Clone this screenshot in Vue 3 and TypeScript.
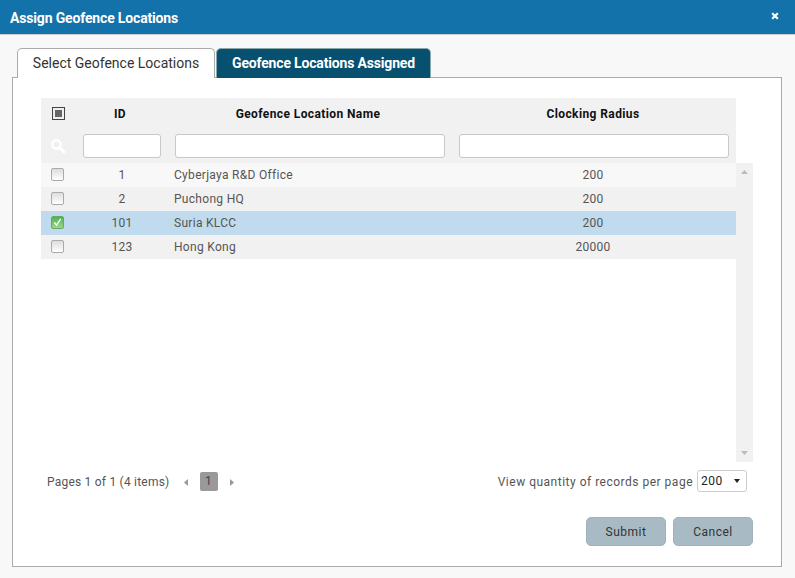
<script setup lang="ts">
interface Row { id: number; name: string; radius: number; checked?: boolean }
const rows: Row[] = [
  { id: 1, name: 'Cyberjaya R&D Office', radius: 200 },
  { id: 2, name: 'Puchong HQ', radius: 200 },
  { id: 101, name: 'Suria KLCC', radius: 200, checked: true },
  { id: 123, name: 'Hong Kong', radius: 20000 },
]
</script>

<template>
  <div class="dialog">
    <header class="title">
      <span class="title-text">Assign Geofence Locations</span>
      <svg class="close" width="8" height="8" viewBox="0 0 8 8"><path d="M1.2 1.2 6.8 6.8M6.8 1.2 1.2 6.8" stroke="#fff" stroke-width="2.2" fill="none"/></svg>
    </header>
    <div class="body">
      <div class="tabs">
        <div class="tab active">Select Geofence Locations</div>
        <div class="tab dark">Geofence Locations Assigned</div>
      </div>
      <div class="panel">
        <div class="grid-wrap">
          <div class="thead">
            <div class="hrow">
              <div class="c0"><span class="master"><i></i></span></div>
              <div class="c1">ID</div>
              <div class="c2">Geofence Location Name</div>
              <div class="c3">Clocking Radius</div>
            </div>
            <div class="frow">
              <div class="c0">
                <svg width="16" height="16" viewBox="0 0 16 16"><circle cx="6.5" cy="6.5" r="4.2" fill="none" stroke="#fff" stroke-width="2.4"/><path d="M9.7 9.7 14 14" stroke="#fff" stroke-width="3" stroke-linecap="round"/></svg>
              </div>
              <input class="f1" type="text" />
              <input class="f2" type="text" />
              <input class="f3" type="text" />
            </div>
          </div>
          <div class="scroller">
            <div class="rows">
              <div v-for="(r, i) in rows" :key="r.id" class="row" :class="{ alt: i % 2 === 1, sel: r.checked }">
                <div class="c0 cb-cell">
                  <span class="cb" :class="{ on: r.checked }">
                    <svg v-if="r.checked" width="12" height="12" viewBox="0 0 12 12"><path d="M2.5 6.500 5 9.500 9.500 2.500" stroke="#fff" stroke-width="1.500" fill="none"/></svg>
                  </span>
                </div>
                <div class="c1">{{ r.id }}</div>
                <div class="c2 name">{{ r.name }}</div>
                <div class="c3">{{ r.radius }}</div>
              </div>
            </div>
            <div class="sbar">
              <svg width="7" height="4" viewBox="0 0 7 4"><path d="M3.500 0 7 4H0z" fill="#bbb"/></svg>
              <svg width="7" height="4" viewBox="0 0 7 4"><path d="M0 0h7L3.500 4z" fill="#bbb"/></svg>
            </div>
          </div>
        </div>
        <div class="pager">
          <div class="left">
            <span class="ptext">Pages 1 of 1 (4 items)</span>
            <svg class="prev" width="4" height="7" viewBox="0 0 4 7"><path d="M4 0v7L0 3.500z" fill="#999"/></svg>
            <span class="page">1</span>
            <svg class="next" width="4" height="7" viewBox="0 0 4 7"><path d="M0 0v7l4-3.500z" fill="#999"/></svg>
          </div>
          <div class="right">
            <span class="vtext">View quantity of records per page</span>
            <span class="select">200<svg width="6" height="4" viewBox="0 0 6 4"><path d="M0 0h6L3 4z" fill="#222"/></svg></span>
          </div>
        </div>
        <div class="actions">
          <button class="btn" type="button">Submit</button>
          <button class="btn" type="button">Cancel</button>
        </div>
      </div>
    </div>
  </div>
</template>

<style>
html, body { margin: 0; background: #f8f8f8; }
</style>

<style scoped>
.dialog {
  width: 795px;
  height: 578px;
  background: #f8f8f8;
  font-family: Roboto, sans-serif;
  font-size: 12px;
  letter-spacing: 0.5px;
  color: #555;
  overflow: hidden;
}
.title {
  height: 34px;
  box-sizing: content-box;
  background: #1472aa;
  border-bottom: 1px solid #ccc;
  color: #fff;
  font-weight: 700;
  font-size: 14px;
  letter-spacing: -0.16px;
  display: flex;
  align-items: center;
  justify-content: space-between;
  padding: 0 16px 0 10px;
}
.title-text { padding-top: 2px; }
.close { margin-top: -3px; }
.body { padding: 13px 12px 0 12px; }
.tabs { display: flex; padding-left: 5px; gap: 1px; height: 30px; position: relative; z-index: 1; }
.tab {
  box-sizing: border-box;
  height: 30px;
  padding-bottom: 2px;
  border-radius: 5px 5px 0 0;
  display: flex;
  align-items: center;
  justify-content: center;
  font-size: 14px;
}
.active {
  width: 198px;
  background: #fff;
  border: 1px solid #aaa;
  border-bottom: none;
  color: #333;
  letter-spacing: 0;
}
.dark {
  width: 215px;
  background: #07506f;
  border: 1px solid #8aa;
  border-bottom: none;
  color: #fff;
  font-weight: 700;
  letter-spacing: -0.17px;
}
.panel {
  box-sizing: border-box;
  width: 770px;
  height: 490px;
  margin-top: -1px;
  background: #fff;
  border: 1px solid #aaa;
  padding: 20px 28px 0 28px;
}
.grid-wrap { width: 712px; }
.thead { width: 695px; background: #f1f1f1; height: 65px; }
.hrow { display: flex; height: 32px; align-items: center; color: #111; font-weight: 700; font-size: 12px; letter-spacing: 0.4px; padding-bottom: 1px; box-sizing: border-box; }
.c0 { width: 33px; display: flex; justify-content: center; align-items: center; flex: none; }
.c1 { width: 92px; text-align: center; flex: none; }
.c2 { width: 284px; text-align: center; flex: none; }
.c3 { width: 286px; text-align: center; flex: none; }
.master {
  box-sizing: border-box;
  width: 13px; height: 13px;
  margin-left: 2px;
  border: 1px solid #444;
  background: #eee;
  display: flex; align-items: center; justify-content: center;
}
.master i { width: 7px; height: 7px; background: #666; display: block; }
.frow { display: flex; align-items: flex-start; height: 33px; padding-top: 4px; box-sizing: border-box; }
.frow .c0 { height: 24px; }
.frow input {
  box-sizing: border-box;
  height: 24px;
  background: #fff;
  border: 1px solid #c8c8c8;
  border-radius: 3px;
  padding: 0;
  margin: 0;
  flex: none;
}
.f1 { width: 78px; margin-left: 9px !important; }
.f2 { width: 270px; margin-left: 14px !important; }
.f3 { width: 270px; margin-left: 14px !important; }
.scroller { display: flex; height: 299px; }
.rows { width: 695px; }
.row { display: flex; height: 24px; align-items: center; background: #f8f8f8; color: #555; letter-spacing: 0.3px; }
.row > div:not(.c0) { padding-bottom: 1px; box-sizing: border-box; }
.row.alt { background: #f1f1f1; }
.row.sel { background: #c0dbee; }
.row .cb-cell { width: 33px; }
.row .c1 { width: 96px; }
.row .c2 { width: 280px; padding-left: 4px; text-align: left; }
.row .c3 { width: 286px; }
.cb {
  box-sizing: border-box;
  width: 13px; height: 13px;
  border: 1px solid #aaa;
  border-radius: 2px;
  background: linear-gradient(#ddd, #fff);
  display: flex; align-items: center; justify-content: center;
  margin-top: -2px;
}
.cb.on { background: linear-gradient(#4fb34f, #9ad98a); border-color: #6aa86a; }
.sbar {
  width: 17px;
  background: #f1f1f1;
  display: flex;
  flex-direction: column;
  justify-content: space-between;
  align-items: center;
  padding: 7px 0;
  box-sizing: border-box;
}
.pager {
  width: 700px;
  margin-left: 6px;
  margin-top: 8px;
  height: 22px;
  display: flex;
  justify-content: space-between;
  align-items: center;
}
.left, .right { display: flex; align-items: center; }
.ptext { letter-spacing: 0.22px; padding-top: 2px; }
.vtext { padding-top: 2px; }
.prev { margin-left: 14px; margin-top: 2px; }
.page {
  width: 18px; height: 19px;
  background: #999;
  border-radius: 2px;
  color: #444;
  display: flex; align-items: center; justify-content: center;
  margin-left: 12px;
}
.next { margin-left: 12px; margin-top: 2px; }
.select {
  box-sizing: border-box;
  width: 50px; height: 22px;
  margin-left: 4px;
  border: 1px solid #ccc;
  border-radius: 3px;
  background: #fff;
  color: #222;
  display: flex; align-items: center; justify-content: space-between;
  padding: 0 6px 0 3px;
}
.actions {
  display: flex;
  justify-content: flex-end;
  gap: 7px;
  width: 712px;
  margin-top: 25px;
}
.btn {
  box-sizing: border-box;
  width: 80px;
  height: 29px;
  background: #a8bbc5;
  border: 1px solid #a0b3bd;
  border-radius: 5px;
  color: #333;
  font: inherit;
  letter-spacing: 0.5px;
  padding: 0;
}
</style>
